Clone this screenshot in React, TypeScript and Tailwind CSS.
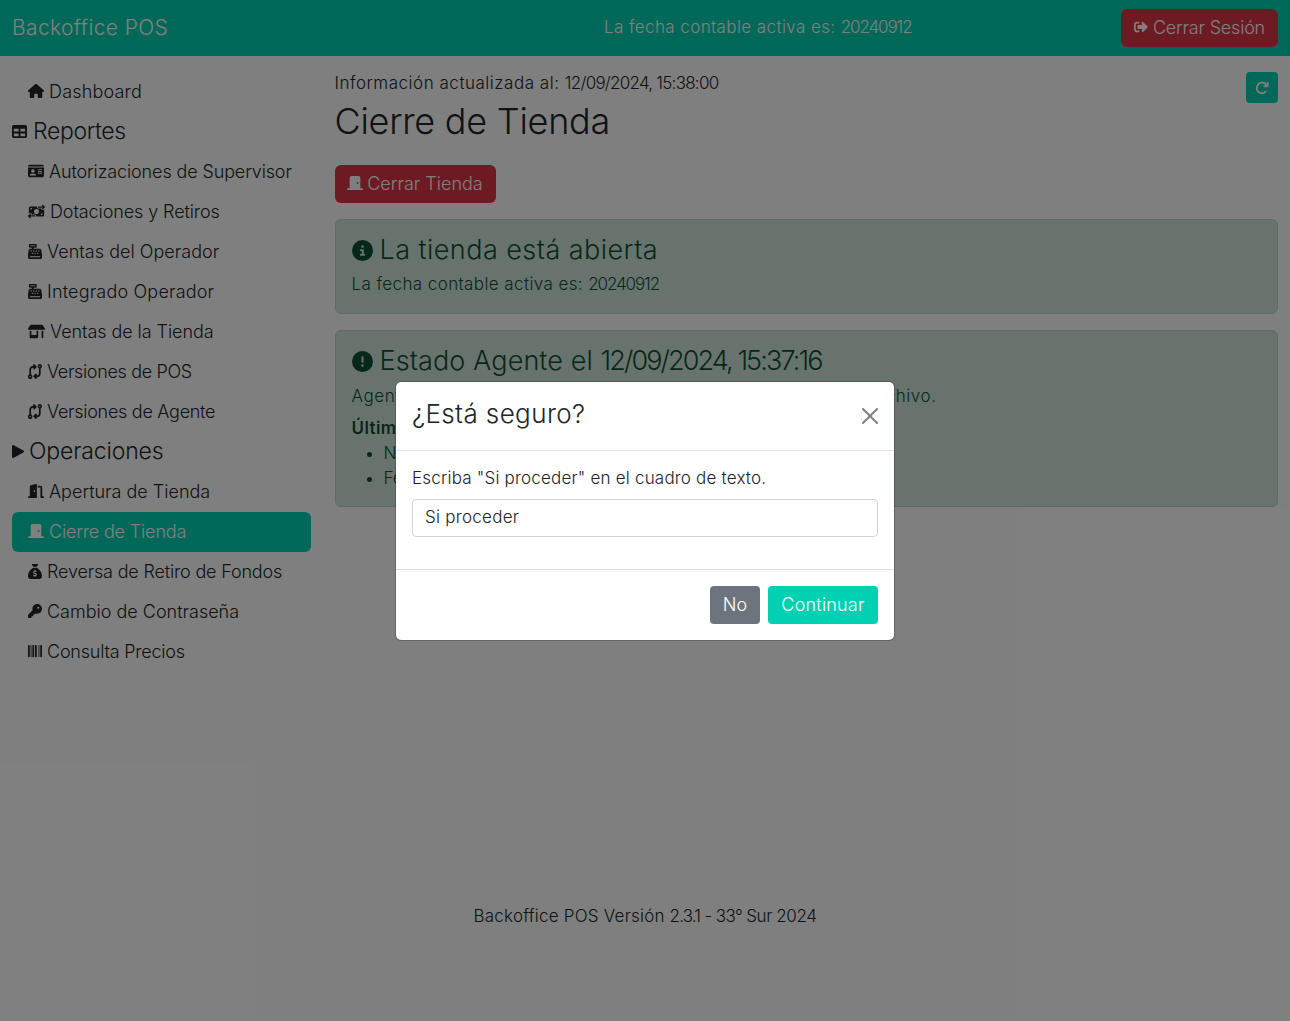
import type { ReactNode } from "react";
import { FaSignOutAlt } from "react-icons/fa";
import {
  FaHouse,
  FaTable,
  FaIdCard,
  FaMoneyBillTransfer,
  FaCashRegister,
  FaShop,
  FaCodeCompare,
  FaDoorOpen,
  FaDoorClosed,
  FaSackDollar,
  FaKey,
  FaBarcode,
  FaArrowRotateRight,
  FaCircleInfo,
  FaCircleExclamation,
} from "react-icons/fa6";

const tallIcon = { preserveAspectRatio: "none", className: "h-[15px] w-[14px]" };

function NavItem({ icon, label, active, track }: { icon: ReactNode; label: string; active?: boolean; track: string }) {
  return (
    <div
      className={`flex h-10 items-center gap-[5px] rounded-md px-4 text-[18px] font-light whitespace-nowrap ${track} ${
        active ? "mt-px -mb-px bg-[#00d1b2] pb-[2px] text-white" : "text-[#212529]"
      }`}
    >
      <span className="flex-none">{icon}</span>
      <span>{label}</span>
    </div>
  );
}

function NavHeading({ icon, label, track }: { icon: ReactNode; label: string; track: string }) {
  return (
    <div className={`flex h-10 items-center pt-px text-[23px] font-light whitespace-nowrap text-[#212529] ${track}`}>
      <span className="flex-none">{icon}</span>
      <span>{label}</span>
    </div>
  );
}

export default function App() {
  return (
    <div className="relative flex min-h-[1021px] flex-col overflow-hidden bg-white font-['Inter',sans-serif] text-[#212529]">
      <nav className="flex h-14 items-center bg-[#00d1b2] px-3 text-white">
        <div className="w-[592px] flex-none text-[21px] font-light tracking-[0.37px]">Backoffice POS</div>
        <div className="text-[17px] font-light tracking-[0.4px] whitespace-nowrap">
          La fecha contable activa es: <span className="tracking-[-1.1px]">20240912</span>
        </div>
        <button className="ml-auto flex h-[38px] w-[157px] items-center justify-center gap-[5px] rounded-md bg-[#dc3545] pb-[2px] text-[18px] font-light tracking-[-0.2px]">
          <FaSignOutAlt size={14} />
          Cerrar Sesión
        </button>
      </nav>

      <div className="flex flex-1">
        <aside className="w-1/4 flex-none px-3 pt-[15px]">
          <NavItem icon={<FaHouse size={16} />} label="Dashboard" track="tracking-[0.18px]" />
          <NavHeading icon={<FaTable size={15} className="mr-[6px]" />} label="Reportes" track="tracking-[-0.35px]" />
          <NavItem icon={<FaIdCard size={16} />} label="Autorizaciones de Supervisor" track="tracking-[-0.13px]" />
          <NavItem icon={<FaMoneyBillTransfer size={17} />} label="Dotaciones y Retiros" track="tracking-[-0.1px]" />
          <NavItem icon={<FaCashRegister {...tallIcon} />} label="Ventas del Operador" track="tracking-[0.03px]" />
          <NavItem icon={<FaCashRegister {...tallIcon} />} label="Integrado Operador" track="tracking-[0.18px]" />
          <NavItem icon={<FaShop size={17} />} label="Ventas de la Tienda" track="tracking-[-0.07px]" />
          <NavItem icon={<FaCodeCompare {...tallIcon} />} label="Versiones de POS" track="tracking-[-0.35px]" />
          <NavItem icon={<FaCodeCompare {...tallIcon} />} label="Versiones de Agente" track="tracking-[-0.28px]" />
          <NavHeading
            icon={
              <svg viewBox="0 0 12 13" className="mr-[5px] h-[13px] w-3 fill-[#212529]" aria-hidden="true">
                <path d="M0 1.2C0 .3.9-.3 1.7.2l9.7 5.3c.8.4.8 1.6 0 2l-9.7 5.3C.9 13.3 0 12.7 0 11.8z" />
              </svg>
            }
            label="Operaciones"
            track="tracking-[-0.15px]"
          />
          <NavItem icon={<FaDoorOpen size={16} />} label="Apertura de Tienda" track="tracking-[0px]" />
          <NavItem icon={<FaDoorClosed size={16} />} label="Cierre de Tienda" track="tracking-[-0.16px]" active />
          <NavItem icon={<FaSackDollar {...tallIcon} />} label="Reversa de Retiro de Fondos" track="tracking-[-0.17px]" />
          <NavItem icon={<FaKey size={14} />} label="Cambio de Contraseña" track="tracking-[0px]" />
          <NavItem icon={<FaBarcode size={14} />} label="Consulta Precios" track="tracking-[-0.22px]" />
        </aside>

        <main className="w-3/4 flex-none px-3 pt-[15px]">
          <button className="float-right mt-px flex h-[31px] w-8 items-center justify-center rounded-[4px] bg-[#00d1b2] text-white">
            <FaArrowRotateRight size={14} />
          </button>
          <div className="text-[17px] leading-6 font-light tracking-[0.52px]">
            Información actualizada al: <span className="tracking-[-0.75px]">12/09/2024, 15:38:00</span>
          </div>
          <h1 className="mt-0.5 text-[36px] leading-12 font-light tracking-[-0.25px]">Cierre de Tienda</h1>
          <button className="mt-5 flex h-[38px] w-[161px] items-center justify-center gap-1 rounded-md bg-[#dc3545] pb-[2px] text-[18px] font-light text-white">
            <FaDoorClosed size={16} />
            Cerrar Tienda
          </button>

          <div className="mt-4 h-[95px] rounded-md border border-[#badbcc] bg-[#d1e7dd] px-4 pt-4 text-[#0f5132]">
            <div className="flex h-[29px] items-center gap-[7px] text-[27px] font-light tracking-[0.45px]">
              <FaCircleInfo className="text-[21px]" />
              La tienda está abierta
            </div>
            <p className="mt-[7px] text-[17px] leading-6 font-light tracking-[0.4px]">
              La fecha contable activa es: <span className="tracking-[-1.1px]">20240912</span>
            </p>
          </div>

          <div className="mt-4 h-[177px] rounded-md border border-[#badbcc] bg-[#d1e7dd] px-4 pt-4 text-[#0f5132]">
            <div className="flex h-[29px] items-center gap-[7px] text-[27px] font-light tracking-[0.1px]">
              <FaCircleExclamation className="flex-none text-[21px]" />
              <span className="whitespace-pre">
                Estado Agente el <span className="tracking-[-1.9px]">12/09/2024, 15:37:16</span>
              </span>
            </div>
            <p className="mt-2 text-[17px] leading-6 font-light tracking-[0.57px] whitespace-nowrap">
              Agente en línea, ya se ha procesado correctamente el último archivo.
            </p>
            <p className="mt-2 text-[17px] leading-6 font-semibold tracking-[0.4px]">Última actualización</p>
            <ul className="mt-px list-disc pl-8 text-[17px] leading-[25px] font-light">
              <li>Nombre</li>
              <li>Fecha</li>
            </ul>
          </div>
        </main>
      </div>

      <footer className="pb-[93px] text-center text-[17px] leading-6 font-light">
        <span className="tracking-[0.22px]">Backoffice POS Versión</span> <span className="tracking-[-0.8px]">2.3.1</span>
        <span className="tracking-[-0.6px]"> - 33° </span>
        <span className="tracking-[-0.4px]">Sur 2024</span>
      </footer>

      <div className="absolute inset-0 flex items-center justify-center bg-black/50">
        <div className="w-[500px] rounded-[6px] border border-black/20 bg-white bg-clip-padding">
          <div className="flex h-[69px] items-center justify-between border-b border-[#dee2e6] px-4">
            <h5 className="pb-1 text-[26px] font-light tracking-[0.4px]">¿Está seguro?</h5>
            <svg viewBox="0 0 16 16" className="h-4 w-4 fill-[#7f7f7f]" aria-hidden="true">
              <path d="M.293.293a1 1 0 011.414 0L8 6.586 14.293.293a1 1 0 111.414 1.414L9.414 8l6.293 6.293a1 1 0 01-1.414 1.414L8 9.414l-6.293 6.293a1 1 0 01-1.414-1.414L6.586 8 .293 1.707a1 1 0 010-1.414z" />
            </svg>
          </div>
          <div className="h-[119px] border-b border-[#dee2e6] px-4 pt-[15px]">
            <p className="text-[17px] leading-6 font-light tracking-[0.2px]">Escriba "Si proceder" en el cuadro de texto.</p>
            <input
              readOnly
              value="Si proceder"
              className="mt-[9px] h-[38px] w-full rounded-[4px] border border-[#ced4da] px-3 pb-[2px] text-[17px] font-light tracking-[0.27px] outline-none"
            />
          </div>
          <div className="flex h-[70px] items-center justify-end gap-2 px-4">
            <button className="h-[38px] w-[50px] rounded-[4px] bg-[#6c757d] pb-px text-[18px] font-light text-white">No</button>
            <button className="h-[38px] w-[110px] rounded-[4px] bg-[#00d1b2] pb-px text-[18px] font-light tracking-[0.2px] text-white">Continuar</button>
          </div>
        </div>
      </div>
    </div>
  );
}
